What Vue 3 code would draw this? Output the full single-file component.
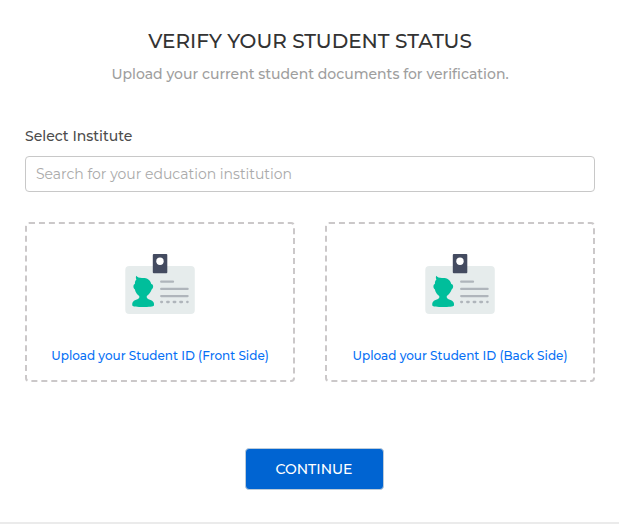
<script setup>
import { ref } from 'vue'

const institute = ref('')
const uploads = [
  { id: 'front', label: 'Upload your Student ID (Front Side)' },
  { id: 'back', label: 'Upload your Student ID (Back Side)' },
]
</script>

<template>
  <main class="page">
    <form class="verify" @submit.prevent>
      <header class="intro">
        <h1>VERIFY YOUR STUDENT STATUS</h1>
        <p>Upload your current student documents for verification.</p>
      </header>

      <div class="field">
        <label for="institute">Select Institute</label>
        <input id="institute" v-model="institute" type="text" placeholder="Search for your education institution" />
      </div>

      <div class="uploads">
        <label v-for="item in uploads" :key="item.id" class="upload" :for="item.id">
          <svg class="card-icon" viewBox="0 0 70 60" aria-hidden="true">
            <rect x="0.300" y="12" width="69.500" height="48" rx="4" fill="#e6ecec" />
            <rect x="27.800" width="14.500" height="19.300" rx="1" fill="#444b60" />
            <circle cx="35" cy="7.200" r="3.700" fill="#fff" />
            <path
              d="M11.300 21.800 C12.500 23.500 14 24 17 24 C22 23.700 25 25.500 26.300 30 C28.700 30.500 28.700 34 26.800 35.300 C25.500 38.500 24 40.500 21.800 42 C21.500 43.500 22 44.500 23.500 45.200 C27.500 46.500 29.500 47.500 29 51.500 C28.500 53.500 7.500 53.500 7.300 51.500 C7 47.500 8.500 46.500 12.500 45.200 C14.300 44.500 14.600 43.500 14.200 42 C12 40.500 10.600 38.500 9.800 35.300 C8 34 8 30.500 9.900 30 C9.900 28 10 26.600 11.400 25.500 C10.700 24.300 10.700 23 11.300 21.800Z"
              fill="#00be9b"
            />
            <g stroke="#afb5bb" stroke-width="2.300" stroke-linecap="round">
              <path d="M36.200 27.700H48M36.200 34.900H62.600M36.200 42.100H62.600" />
              <path d="M36.200 48H37M42.200 48H43.700M48.700 48H50.300M55.300 48H57M62.200 48H62.600" />
            </g>
          </svg>
          <span>{{ item.label }}</span>
          <input :id="item.id" class="file" type="file" accept="image/*" />
        </label>
      </div>

      <button class="continue" type="submit">CONTINUE</button>
    </form>
  </main>
</template>

<style>
body {
  margin: 0;
  background: #fff;
}
</style>

<style scoped>
.page {
  font-family: Montserrat, Inter, "Open Sans", sans-serif;
  font-weight: 500;
  padding: 28px 24px 32px 25px;
  border-bottom: 2px solid #ebebeb;
}

.verify {
  display: flex;
  flex-direction: column;
}

.intro {
  text-align: center;
}

h1 {
  margin: 0;
  font-size: 20px;
  line-height: 26px;
  font-weight: 500;
  color: #333;
}

.intro p {
  margin: 10px 0 0;
  font-size: 14px;
  line-height: 20px;
  color: #9e9e9e;
}

.field {
  display: flex;
  flex-direction: column;
  gap: 10px;
  margin-top: 42px;
}

.field label {
  font-size: 14px;
  line-height: 20px;
  color: #4c4c4c;
}

.field input {
  box-sizing: border-box;
  width: 100%;
  height: 36px;
  padding: 0 10px;
  border: 1px solid #c8c8c8;
  border-radius: 4px;
  background: #fff;
  color: #444;
  font-family: inherit;
  font-size: 14px;
  font-weight: 400;
}

.field input::placeholder {
  color: #aaa;
  opacity: 1;
}

.uploads {
  display: grid;
  grid-template-columns: 1fr 1fr;
  gap: 30px;
  margin-top: 30px;
}

.upload {
  position: relative;
  display: flex;
  flex-direction: column;
  align-items: center;
  gap: 32px;
  padding: 30px 8px 14px;
  border: 2px dashed #cbc8c9;
  border-radius: 4px;
  color: #0670f5;
  font-size: 12px;
  line-height: 20px;
  cursor: pointer;
}

.card-icon {
  display: block;
  width: 70px;
  height: 60px;
}

.file {
  position: absolute;
  width: 1px;
  height: 1px;
  opacity: 0;
}

.continue {
  align-self: center;
  margin: 66px 0 0 8px;
  padding: 10px 30px;
  border: 1px solid #bccbd9;
  border-radius: 4px;
  background: #0064d2;
  color: #fff;
  font-family: inherit;
  font-size: 14px;
  font-weight: 500;
  line-height: 20px;
  cursor: pointer;
}
</style>
